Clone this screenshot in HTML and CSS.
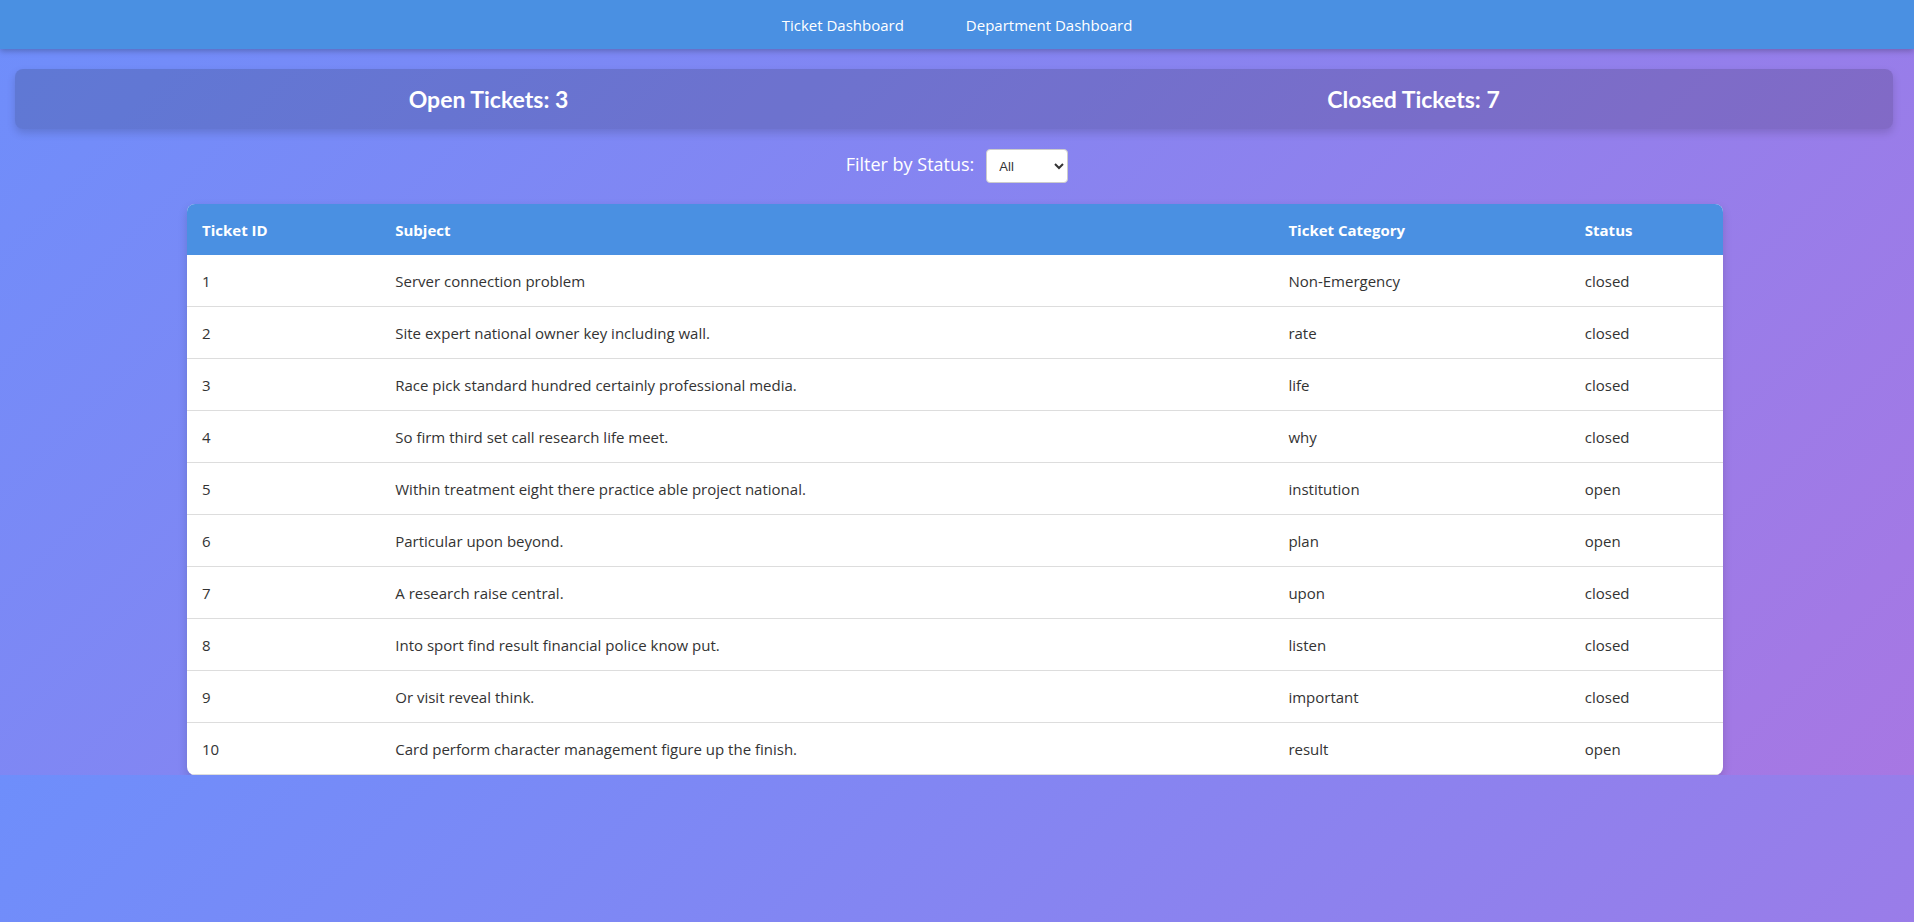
FILE: index.html
```html
<!DOCTYPE html>
<html lang="en">
<head>
<meta charset="utf-8">
<title>Ticket Dashboard</title>
<link rel="stylesheet" href="styles.css">
</head>
<body>
<nav class="navbar">
  <a class="nav-link" href="#">Ticket Dashboard</a>
  <a class="nav-link" href="#">Department Dashboard</a>
</nav>
<main class="container">
  <section class="summary">
    <h3 class="summary-item">Open Tickets: 3</h3>
    <h3 class="summary-item">Closed Tickets: 7</h3>
  </section>
  <div class="filter">
    <label class="filter-label" for="status">Filter by Status:</label>
    <select id="status" class="filter-select">
      <option>All</option>
      <option>open</option>
      <option>closed</option>
    </select>
  </div>
  <table class="tickets">
    <thead>
      <tr>
        <th class="col-id">Ticket ID</th>
        <th class="col-subject">Subject</th>
        <th class="col-cat">Ticket Category</th>
        <th class="col-status">Status</th>
      </tr>
    </thead>
    <tbody>
      <tr><td>1</td><td>Server connection problem</td><td>Non-Emergency</td><td>closed</td></tr>
      <tr><td>2</td><td>Site expert national owner key including wall.</td><td>rate</td><td>closed</td></tr>
      <tr><td>3</td><td>Race pick standard hundred certainly professional media.</td><td>life</td><td>closed</td></tr>
      <tr><td>4</td><td>So firm third set call research life meet.</td><td>why</td><td>closed</td></tr>
      <tr><td>5</td><td>Within treatment eight there practice able project national.</td><td>institution</td><td>open</td></tr>
      <tr><td>6</td><td>Particular upon beyond.</td><td>plan</td><td>open</td></tr>
      <tr><td>7</td><td>A research raise central.</td><td>upon</td><td>closed</td></tr>
      <tr><td>8</td><td>Into sport find result financial police know put.</td><td>listen</td><td>closed</td></tr>
      <tr><td>9</td><td>Or visit reveal think.</td><td>important</td><td>closed</td></tr>
      <tr><td>10</td><td>Card perform character management figure up the finish.</td><td>result</td><td>open</td></tr>
    </tbody>
  </table>
</main>
</body>
</html>
```

FILE: styles.css
```css
html, body {
  margin: 0;
  padding: 0;
}

body {
  font-family: "Segoe UI", "Open Sans", "Liberation Sans", sans-serif;
  background: linear-gradient(135deg, #6e8efb, #a777e3);
  color: #333;
}

.navbar {
  display: flex;
  justify-content: center;
  background: #4a90e2;
  box-shadow: 0 2px 6px rgba(0, 0, 0, 0.25);
  height: 49px;
  align-items: center;
}

.nav-link {
  color: #fff;
  text-decoration: none;
  font-size: 15px;
  margin: 0 31px;
}

.container {
  padding: 20px 21px 0 15px;
}

.summary {
  display: flex;
  height: 60px;
  align-items: center;
  background: rgba(0, 0, 0, 0.15);
  border-radius: 8px;
  box-shadow: 0 4px 8px rgba(0, 0, 0, 0.15);
}

.summary-item {
  flex: 1;
  margin: 0;
  text-align: center;
  color: #fff;
  font-family: "Segoe UI", Lato, "Open Sans", sans-serif;
  font-size: 23px;
  font-weight: bold;
}

.summary-item:first-child {
  padding-left: 11px;
}

.summary-item:last-child {
  padding-right: 17px;
}

.filter {
  display: flex;
  justify-content: center;
  align-items: center;
  gap: 12px;
  margin: 20px 0 21px;
  padding-left: 6px;
}

.filter-label {
  color: #fff;
  font-size: 18px;
  padding-bottom: 5px;
}

.filter-select {
  width: 82px;
  height: 34px;
  padding: 0 8px;
  font-family: Arial, "Liberation Sans", sans-serif;
  font-size: 13px;
  color: #333;
  background: #fff;
  border: 1px solid #ccc;
  border-radius: 4px;
}

.tickets {
  width: 1536px;
  margin: 0 0 0 172px;
  border-collapse: collapse;
  background: #fff;
  border-radius: 8px;
  overflow: hidden;
  box-shadow: 0 4px 10px rgba(0, 0, 0, 0.15);
  font-size: 15px;
}

.tickets th,
.tickets td {
  text-align: left;
  padding: 16px 15px 14px;
  line-height: 21px;
}

.tickets th {
  background: #4a90e2;
  color: #fff;
  font-weight: bold;
}

.tickets td {
  border-bottom: 1px solid #ddd;
}

.col-id { width: 163px; }
.col-subject { width: 862px; }
.col-cat { width: 266px; }
.col-status { width: 123px; }
```
